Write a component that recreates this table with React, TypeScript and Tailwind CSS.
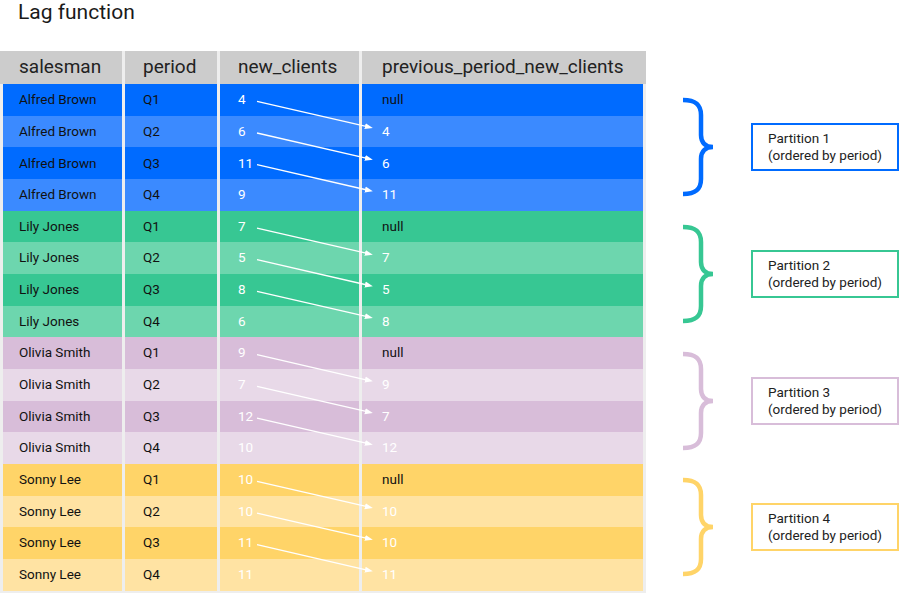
import React from "react";

interface Row {
  salesman: string;
  period: string;
  newClients: number;
  previous: number | null;
}

interface Partition {
  name: string;
  dark: string;
  light: string;
  stroke: string;
  border: string;
  rows: Row[];
}

const build = (salesman: string, values: number[]): Row[] =>
  values.map((v, i) => ({
    salesman,
    period: `Q${i + 1}`,
    newClients: v,
    previous: i === 0 ? null : values[i - 1],
  }));

const partitions: Partition[] = [
  {
    name: "Partition 1",
    dark: "bg-[#006bff]",
    light: "bg-[#3b8aff]",
    stroke: "#006bff",
    border: "border-[#006bff]",
    rows: build("Alfred Brown", [4, 6, 11, 9]),
  },
  {
    name: "Partition 2",
    dark: "bg-[#37c793]",
    light: "bg-[#6dd6ae]",
    stroke: "#37c793",
    border: "border-[#37c793]",
    rows: build("Lily Jones", [7, 5, 8, 6]),
  },
  {
    name: "Partition 3",
    dark: "bg-[#d8bdd9]",
    light: "bg-[#e8d9e8]",
    stroke: "#d8bdd9",
    border: "border-[#d8bdd9]",
    rows: build("Olivia Smith", [9, 7, 12, 10]),
  },
  {
    name: "Partition 4",
    dark: "bg-[#ffd468]",
    light: "bg-[#ffe3a3]",
    stroke: "#ffd468",
    border: "border-[#ffd468]",
    rows: build("Sonny Lee", [10, 10, 11, 11]),
  },
];

const ROW_H = 31.67;
const HEADER_H = 33;

// arrows from each new_clients value to the next row's previous value
function Arrows() {
  const lines: React.ReactElement[] = [];
  partitions.forEach((_, p) => {
    for (let i = 0; i < 3; i++) {
      const r = p * 4 + i;
      const y1 = HEADER_H + (r + 0.5) * ROW_H + 1.5;
      const y2 = HEADER_H + (r + 1.5) * ROW_H - 3.5;
      lines.push(
        <line
          key={r}
          x1={257}
          y1={y1}
          x2={366}
          y2={y2 - 1.6}
          stroke="white"
          strokeWidth={1.3}
          markerEnd="url(#head)"
        />
      );
    }
  });
  return (
    <svg className="absolute inset-0 pointer-events-none" width={646} height={541}>
      <defs>
        <marker id="head" markerWidth="8" markerHeight="8" refX="1" refY="4" orient="auto" markerUnits="userSpaceOnUse">
          <path d="M0 1 L8 4 L0 7 Z" fill="white" />
        </marker>
      </defs>
      {lines}
    </svg>
  );
}

function Brace({ color }: { color: string }) {
  return (
    <svg width={36} height={100} viewBox="0 0 36 100" className="shrink-0">
      <path
        d="M3 3 C15 3 21 7 21 18 L21 38 C21 46 26 50 33 50 C26 50 21 54 21 62 L21 82 C21 93 15 97 3 97"
        fill="none"
        stroke={color}
        strokeWidth={4.5}
      />
    </svg>
  );
}

export default function App() {
  return (
    <div className="w-[900px] h-[611px] bg-white font-['Roboto',sans-serif] text-[#1a1a1a]">
      {/* Title */}
      <div className="h-[51px] pl-[18px] text-[21px] leading-[24px]">Lag function</div>

      <div className="flex">
        {/* Table */}
        <div className="relative w-[646px] bg-[#eeeeee]">
          <div className="grid grid-cols-[122px_92px_139px_284px] gap-x-[3px] text-[19px] text-[#222]">
            <div className="h-[33px] bg-[#cccccc] pl-[19px] flex items-center">salesman</div>
            <div className="h-[33px] bg-[#cccccc] pl-[18px] flex items-center">period</div>
            <div className="h-[33px] bg-[#cccccc] pl-[18px] flex items-center">new_clients</div>
            <div className="h-[33px] bg-[#cccccc] pl-[20px] flex items-center">previous_period_new_clients</div>
          </div>

          <div className="px-[3px] pb-[2px] text-[13.5px]">
            {partitions.map((part) =>
              part.rows.map((row, i) => {
                const bg = i % 2 === 0 ? part.dark : part.light;
                return (
                  <div
                    key={`${row.salesman}-${row.period}`}
                    className="grid grid-cols-[119px_92px_139px_281px] gap-x-[3px] h-[31.67px]"
                  >
                    <div className={`${bg} pl-4 pb-px flex items-center text-[#111]`}>{row.salesman}</div>
                    <div className={`${bg} pl-[18px] pb-px flex items-center text-[#111]`}>{row.period}</div>
                    <div className={`${bg} pl-[18px] pb-px flex items-center text-white`}>{row.newClients}</div>
                    <div className={`${bg} pl-5 pb-px flex items-center`}>
                      {row.previous === null ? (
                        <span className="text-[#111]">null</span>
                      ) : (
                        <span className="text-white">{row.previous}</span>
                      )}
                    </div>
                  </div>
                );
              })
            )}
          </div>

          <Arrows />
        </div>

        {/* Partitions */}
        <div className="flex-1 pt-[33px]">
          {partitions.map((part) => (
            <div key={part.name} className="h-[126.67px] flex items-center pl-[34px]">
              <Brace color={part.stroke} />
              <div className={`ml-[35px] w-[148px] h-[48px] border-2 ${part.border} pl-[15px] flex flex-col justify-center text-[13.5px] leading-[17px] text-[#222]`}>
                <span>{part.name}</span>
                <span>(ordered by period)</span>
              </div>
            </div>
          ))}
        </div>
      </div>
    </div>
  );
}
